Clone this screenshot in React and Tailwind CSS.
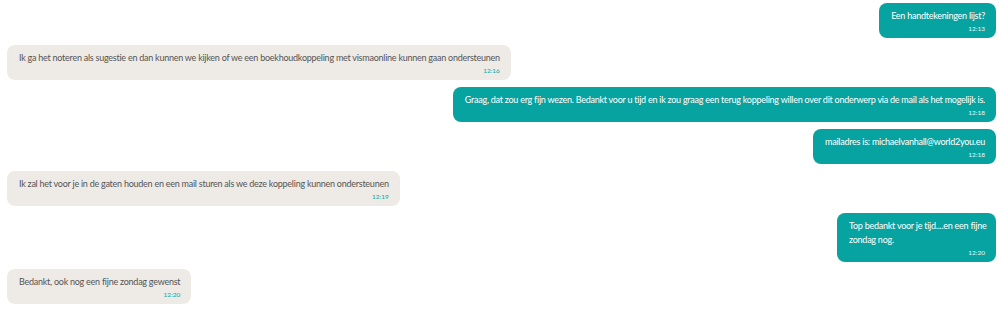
import React from 'react';

const messages = [
  { id: 1, mine: true, text: 'Een handtekeningen lijst?', time: '12:13' },
  {
    id: 2,
    mine: false,
    text: 'Ik ga het noteren als sugestie en dan kunnen we kijken of we een boekhoudkoppeling met vismaonline kunnen gaan ondersteunen',
    time: '12:16',
  },
  {
    id: 3,
    mine: true,
    text: 'Graag, dat zou erg fijn wezen. Bedankt voor u tijd en ik zou graag een terug koppeling willen over dit onderwerp via de mail als het mogelijk is.',
    time: '12:18',
  },
  { id: 4, mine: true, text: 'mailadres is: michaelvanhall@world2you.eu', time: '12:18' },
  {
    id: 5,
    mine: false,
    text: 'Ik zal het voor je in de gaten houden en een mail sturen als we deze koppeling kunnen ondersteunen',
    time: '12:19',
  },
  { id: 6, mine: true, lines: ['Top bedankt voor je tijd....en een fijne', 'zondag nog.'], time: '12:20' },
  { id: 7, mine: false, text: 'Bedankt, ook nog een fijne zondag gewenst', time: '12:20' },
];

function Bubble({ msg }) {
  return (
    <div className={msg.mine ? 'flex justify-end' : 'flex justify-start'}>
      <div
        className={
          (msg.mine ? 'bg-[#07a3a0] text-white' : 'bg-[#eeeae6] text-[#555555]') +
          ' rounded-lg pl-[12px] pr-[11px] pt-[6px] pb-[5px]' +
          (msg.lines ? ' w-[159px]' : '')
        }
      >
        {msg.lines ? (
          msg.lines.map((line) => (
            <p key={line} className="text-[9px] leading-[14px] tracking-[-0.25px] whitespace-nowrap">
              {line}
            </p>
          ))
        ) : (
          <p className="text-[9px] leading-[14px] tracking-[-0.25px]">{msg.text}</p>
        )}
        <p
          className={
            (msg.mine ? 'text-white/90' : 'text-[#0aa5a0]') +
            ' text-right text-[6.5px] leading-[9px] mt-[1px]'
          }
        >
          {msg.time}
        </p>
      </div>
    </div>
  );
}

export default function App() {
  return (
    <div
      className="w-[999px] h-[319px] bg-white overflow-hidden pl-[7px] pr-[3px] pt-[3px] flex flex-col gap-[7px]"
      style={{ fontFamily: 'Lato, "Liberation Sans", sans-serif' }}
    >
      {messages.map((m) => (
        <Bubble key={m.id} msg={m} />
      ))}
    </div>
  );
}
